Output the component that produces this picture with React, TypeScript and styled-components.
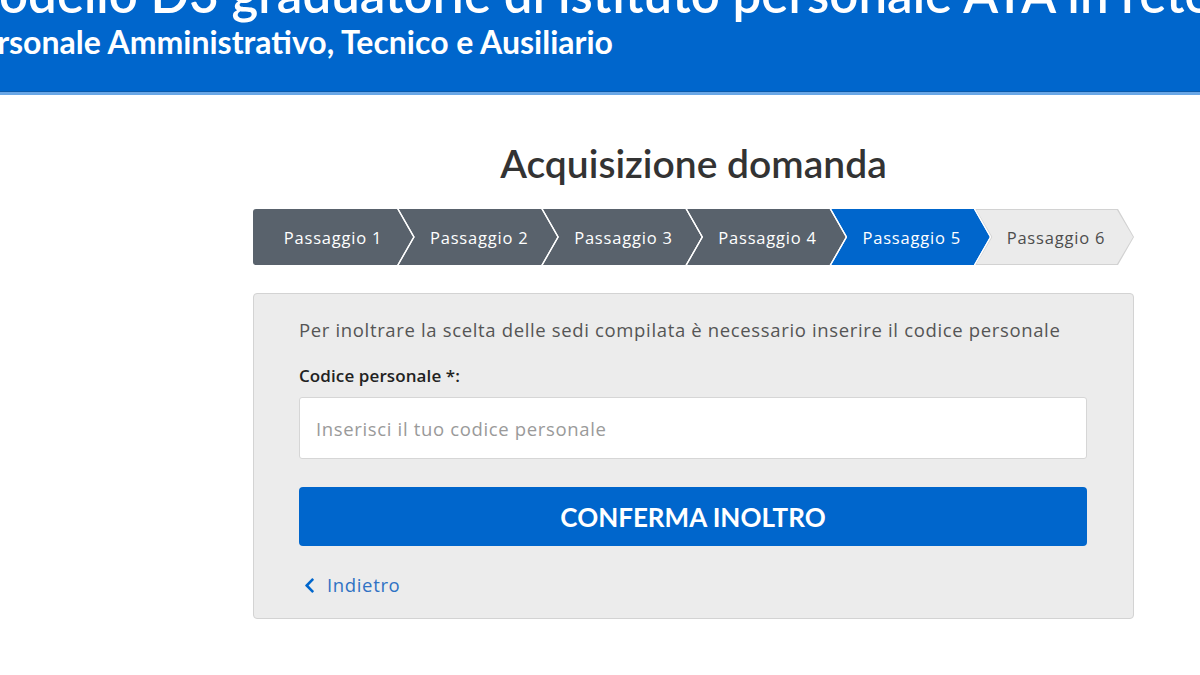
import React from "react"
import styled, { createGlobalStyle } from "styled-components"
import { FaChevronLeft } from "react-icons/fa"

const HEAD_FONT = `"Lato", "Open Sans", "Liberation Sans", sans-serif`
const BODY_FONT = `"Open Sans", "Lato", "Liberation Sans", sans-serif`

const steps = ["Passaggio 1", "Passaggio 2", "Passaggio 3", "Passaggio 4", "Passaggio 5", "Passaggio 6"]
const currentStep = 4

type StepState = "done" | "current" | "todo"

const App: React.FC = () => {
	return (
		<>
			<GlobalStyle />
			<Header>
				<HeaderInner>
					<SiteTitle>Modello D3 graduatorie di istituto personale ATA in rete</SiteTitle>
					<SiteSubtitle>Personale Amministrativo, Tecnico e Ausiliario</SiteSubtitle>
				</HeaderInner>
			</Header>

			<Main>
				<PageTitle>Acquisizione domanda</PageTitle>

				<Stepper>
					{steps.map((label, index) => {
						const state: StepState =
							index < currentStep ? "done" : index === currentStep ? "current" : "todo"
						return (
							<Step key={label} $state={state} $first={index === 0}>
								<StepFace $state={state} $first={index === 0}>
									{label}
								</StepFace>
							</Step>
						)
					})}
				</Stepper>

				<Card>
					<Intro>
						Per inoltrare la scelta delle sedi compilata è necessario inserire il codice personale
					</Intro>
					<FieldLabel htmlFor="codice">Codice personale *:</FieldLabel>
					<TextInput id="codice" type="text" placeholder="Inserisci il tuo codice personale" />
					<SubmitButton type="button">CONFERMA INOLTRO</SubmitButton>
					<BackLink href="#">
						<FaChevronLeft size={17} />
						Indietro
					</BackLink>
				</Card>
			</Main>
		</>
	)
}

const GlobalStyle = createGlobalStyle`
	html, body {
		margin: 0;
		padding: 0;
		background: #ffffff;
		font-family: ${BODY_FONT};
	}
	* {
		box-sizing: border-box;
	}
`

const Header = styled.header`
	height: 95px;
	background: #0066cc;
	border-bottom: 3px solid #6aa7e6;
	box-shadow: inset 0 -1px 0 #0b5aab;
	overflow: hidden;
`

const HeaderInner = styled.div`
	margin-left: -39px;
	margin-top: -36px;
	white-space: nowrap;
	color: #ffffff;
	font-family: ${HEAD_FONT};
`

const SiteTitle = styled.div`
	margin-left: -9px;
	font-size: 51px;
	line-height: 60px;
	font-weight: 600;
`

const SiteSubtitle = styled.div`
	font-size: 32px;
	line-height: 36px;
	font-weight: 700;
`

const Main = styled.main`
	width: 881px;
	margin-left: 253px;
	padding-top: 43px;
`

const PageTitle = styled.h1`
	margin: 0;
	text-align: center;
	font-family: ${HEAD_FONT};
	font-size: 39px;
	line-height: 50px;
	font-weight: 600;
	color: #333333;
`

const Stepper = styled.div`
	display: flex;
	height: 56px;
	margin-top: 21px;
`

const stepColors: Record<StepState, { bg: string; fg: string }> = {
	done: { bg: "#59626c", fg: "#ffffff" },
	current: { bg: "#0066cc", fg: "#ffffff" },
	todo: { bg: "#ebebeb", fg: "#4d4d4d" },
}

const arrowShape = (first: boolean) =>
	first
		? "polygon(0 0, calc(100% - 16px) 0, 100% 50%, calc(100% - 16px) 100%, 0 100%)"
		: "polygon(1.5px 0, calc(100% - 16px) 0, 100% 50%, calc(100% - 16px) 100%, 1.5px 100%, 17.5px 50%)"

const Step = styled.div<{ $state: StepState; $first: boolean }>`
	width: 161px;
	height: 100%;
	margin-left: ${(p) => (p.$first ? "0" : "-16px")};
	padding: ${(p) => (p.$state === "todo" ? "1px" : "0")};
	background: ${(p) => (p.$state === "todo" ? "#d2d2d2" : "transparent")};
	border-radius: ${(p) => (p.$first ? "3px 0 0 3px" : "0")};
	clip-path: ${(p) => arrowShape(p.$first)};
`

const StepFace = styled.div<{ $state: StepState; $first: boolean }>`
	display: flex;
	align-items: center;
	justify-content: center;
	height: 100%;
	padding-left: ${(p) => (p.$first ? "0" : "4px")};
	background: ${(p) => stepColors[p.$state].bg};
	color: ${(p) => stepColors[p.$state].fg};
	font-size: 16.5px;
	letter-spacing: 0.8px;
	white-space: nowrap;
	border-radius: inherit;
	clip-path: ${(p) => arrowShape(p.$first)};
`

const Card = styled.section`
	margin-top: 28px;
	padding: 23px 46px 21px 45px;
	background: #ececec;
	border: 1px solid #d3d3d3;
	border-radius: 4px;
	display: flex;
	flex-direction: column;
`

const Intro = styled.p`
	margin: 0;
	font-size: 18.5px;
	line-height: 26px;
	letter-spacing: 0.65px;
	color: #555555;
`

const FieldLabel = styled.label`
	margin-top: 21px;
	font-size: 17px;
	line-height: 24px;
	font-weight: 600;
	letter-spacing: 0.1px;
	color: #222222;
`

const TextInput = styled.input`
	margin-top: 9px;
	height: 62px;
	padding: 0 16px;
	background: #ffffff;
	border: 1px solid #d6d6d6;
	border-radius: 3px;
	font-family: ${BODY_FONT};
	font-size: 18.5px;
	letter-spacing: 0.65px;
	color: #333333;
	outline: none;

	&::placeholder {
		color: #9a9a9a;
	}
`

const SubmitButton = styled.button`
	margin-top: 28px;
	height: 59px;
	border: none;
	border-radius: 4px;
	background: #0066cc;
	color: #ffffff;
	font-family: ${HEAD_FONT};
	font-size: 26px;
	font-weight: 700;
	cursor: pointer;
`

const BackLink = styled.a`
	margin-top: 27px;
	display: inline-flex;
	align-items: center;
	gap: 9px;
	align-self: flex-start;
	padding-left: 2px;
	font-size: 18.5px;
	line-height: 24px;
	letter-spacing: 0.65px;
	color: #2f72c4;
	text-decoration: none;

	svg {
		color: #0066cc;
	}
`

export default App
